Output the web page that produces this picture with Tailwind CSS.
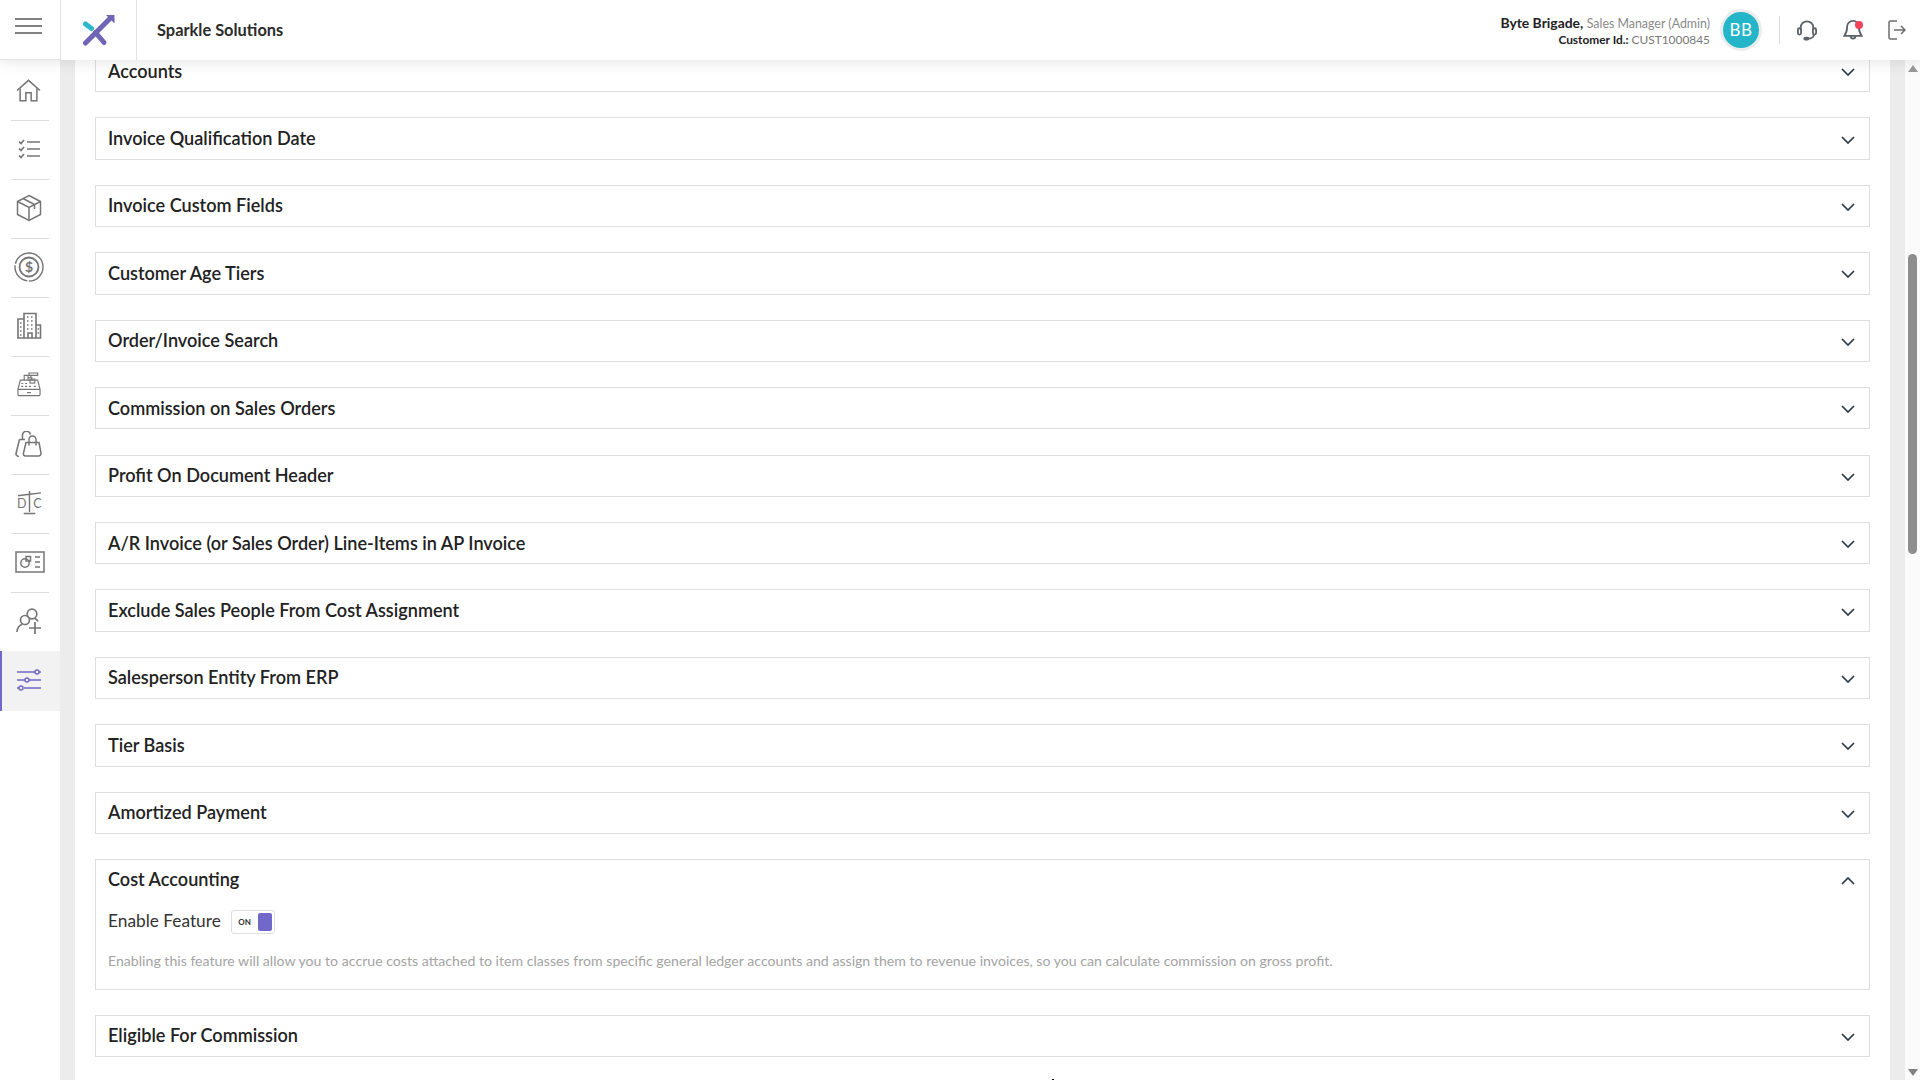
<!doctype html>
<html>
<head>
<meta charset="utf-8">
<script src="https://cdn.jsdelivr.net/npm/@tailwindcss/browser@4"></script>
</head>
<body class="bg-white font-['Lato','Noto_Sans',sans-serif] text-[#212529]">
<div class="relative w-[1920px] h-[1080px] overflow-hidden flex flex-col">
  <!-- Header -->
  <header class="relative z-10 h-[60px] shrink-0 flex items-center bg-white shadow-[0_2px_14px_rgba(0,0,0,0.1)]">
    <div class="w-[61px] h-full flex items-start pl-[15px] pt-[18px] border-r border-[#e3e3e3] border-b">
      <svg width="27" height="16" viewBox="0 0 27 16" fill="none" stroke="#808080" stroke-width="2"><path d="M0 1h27M0 8h27M0 15h27"/></svg>
    </div>
    <div class="w-[76px] h-full flex items-center justify-center border-r border-[#e3e3e3]">
      <svg width="34" height="34" viewBox="0 0 34 34"><path d="M3.500 30 L28 5.500" stroke="#6f64b5" stroke-width="5" stroke-linecap="round" fill="none"/><path d="M24 2 H32.500 V10.500 Z" fill="#6f64b5"/><path d="M13.500 19.500 L22 29.500" stroke="#6f64b5" stroke-width="5" stroke-linecap="round"/><path d="M3.500 11 L9.500 15.500" stroke="#2db8cc" stroke-width="5" stroke-linecap="round"/></svg>
    </div>
    <div class="pl-[20px] text-[16.400px] font-bold text-[#2b2b2b]">Sparkle Solutions</div>
    <div class="ml-auto flex items-center">
      <div class="text-right leading-none mr-[10px] pt-[2px]">
        <div class="text-[13.900px] font-bold text-[#222] leading-[16px]">Byte Brigade, <span class="text-[12.400px] font-normal text-[#8a8a8a]">Sales Manager (Admin)</span></div>
        <div class="text-[11.900px] font-bold text-[#222] leading-[16px]">Customer Id.: <span class="font-normal text-[#777]">CUST1000845</span></div>
      </div>
      <div class="w-[42px] h-[42px] rounded-full bg-[#25b5c9] border-[3.500px] border-[#ececec] flex items-center justify-center text-white text-[17px] tracking-[0.500px]">BB</div>
      <div class="w-px h-[28px] bg-[#dcdcdc] ml-[17px] mr-[17px]"></div>
      <svg class="mr-[26px]" width="20" height="22" viewBox="0 0 22 24" fill="none" stroke="#5c6268" stroke-width="2"><path d="M4 12V9.500a7 7 0 0 1 14 0V12"/><rect x="1" y="10" width="3.500" height="7" rx="1.700"/><rect x="17.500" y="10" width="3.500" height="7" rx="1.700"/><path d="M18.500 17c0 3-3 4.500-6 4.500"/><rect x="8" y="20.500" width="4.500" height="2" rx="1"/></svg>
      <div class="relative mr-[25px]">
        <svg class="block" width="20" height="22" viewBox="0 0 22 24" fill="none" stroke="#5c6268" stroke-width="2"><path d="M11 2a6.500 6.500 0 0 0-6.500 6.500c0 6-1.500 8-3 10h19c-1.500-2-3-4-3-10A6.500 6.500 0 0 0 11 2z"/><path d="M8.500 19a2.500 2.500 0 0 0 5 0"/></svg>
        <span class="absolute right-0 top-[2px] w-[8px] h-[8px] rounded-full bg-[#f4435a]"></span>
      </div>
      <svg class="mr-[14px]" width="18" height="20" viewBox="0 0 18 20" fill="none" stroke="#6d6d6d" stroke-width="1.500"><path d="M9 1H2.500A1.500 1.500 0 0 0 1 2.500v15A1.500 1.500 0 0 0 2.500 19H9"/><path d="M6 10h11M13 6l4 4-4 4"/></svg>
    </div>
  </header>

  <div class="flex flex-1 min-h-0">
    <!-- Sidebar -->
    <nav class="w-[60px] shrink-0 flex flex-col bg-white">
      <div class="h-[60px] flex items-center justify-center pr-[3px]"><svg width="27" height="23" viewBox="0 0 28 26" fill="none" stroke="#757575" stroke-width="1.700"><path d="M1 13 L14 1.500 27 13"/><path d="M4.500 10.500V24.500H11V15.500H17V24.500H23.500V10.500"/></svg></div>
      <div class="h-px mx-[11px] bg-[#dcdcdc]"></div>
      <div class="h-[58px] flex items-center justify-center pr-[2px] pb-[2px]"><svg width="22" height="20" viewBox="0 0 22 20" fill="none" stroke="#757575" stroke-width="1.700"><path d="M1 2.500l2 2 3-3.500M1 9.500l2 2 3-3.500M1 16.500l2 2 3-3.500"/><path d="M9 3h13M9 10h13M9 17h13"/></svg></div>
      <div class="h-px mx-[11px] bg-[#dcdcdc]"></div>
      <div class="h-[58px] flex items-center justify-center pr-[2px] pb-[3px]"><svg width="26" height="28" viewBox="0 0 26 28" fill="none" stroke="#757575" stroke-width="1.500"><path d="M13 1.500L24.500 7.500V20.500L13 26.500 1.500 20.500V7.500Z"/><path d="M1.500 7.500L13 13.500 24.500 7.500M13 13.500V26.500M7 4.500L18.500 10.500V15"/></svg></div>
      <div class="h-px mx-[11px] bg-[#dcdcdc]"></div>
      <div class="h-[58px] flex items-center justify-center pr-[2px] pb-[3px]"><svg width="30" height="30" viewBox="0 0 30 30" fill="none" stroke="#757575" stroke-width="1.400"><path d="M15 1a14 14 0 0 1 14 14M29 15a14 14 0 0 1-14 14 14 14 0 0 1-14-14A14 14 0 0 1 15 1" stroke-dasharray="22 1.500"/><circle cx="15" cy="15" r="9.500" stroke-width="1.800"/><text x="15" y="20" text-anchor="middle" font-size="14" font-weight="700" fill="#757575" stroke="none" font-family="Lato">$</text></svg></div>
      <div class="h-px mx-[11px] bg-[#dcdcdc]"></div>
      <div class="h-[58px] flex items-center justify-center pr-[2px] pb-[3px]"><svg width="26" height="27" viewBox="0 0 26 27" fill="none" stroke="#757575" stroke-width="1.600"><path d="M8 26V1.500H20V26M8 7H2V26H24.500V13H20M1 26H25"/><path d="M11 5h1.500M15 5h1.500M11 9h1.500M15 9h1.500M11 13h1.500M15 13h1.500M11 17h1.500M15 17h1.500M4 11h1.500M4 15h1.500M4 19h1.500M4 23h1.500M21.500 17h1.500M21.500 21h1.500"/><path d="M12 26v-5h4v5"/></svg></div>
      <div class="h-px mx-[11px] bg-[#dcdcdc]"></div>
      <div class="h-[58px] flex items-center justify-center pr-[2px] pb-[4px]"><svg width="26" height="25" viewBox="0 0 26 26" fill="none" stroke="#757575" stroke-width="1.200"><path d="M1.500 18v5.500a1 1 0 0 0 1 1h21a1 1 0 0 0 1-1V18M1.500 18L4 8.500H22L24.500 18M1.500 18h23"/><path d="M8 8.500V3.500h4v5M12 6h4v2.500M15 6V3M13 1h9v2.500h-9z"/><rect x="14" y="7.500" width="5" height="4"/><path d="M5 12h2M9 12h2M5 15h2M9 15h2M13 15h2M18 15h2M11 21.500h4"/></svg></div>
      <div class="h-px mx-[11px] bg-[#dcdcdc]"></div>
      <div class="h-[58px] flex items-center justify-center pr-[3px] pb-[3px]"><svg width="27" height="26" viewBox="0 0 27 26" fill="none" stroke="#757575" stroke-width="1.500"><path d="M7.500 9V5a4 4 0 0 1 8-1.500M4.500 8.500H10M4.500 8.500L1 22.500c-.3 1.500 1 2.700 3 3"/><path d="M10 25h13.500a2.500 2.500 0 0 0 2.500-3l-2-10.500H11L8.500 22a2.500 2.500 0 0 0 1.500 3z"/><path d="M14 14.500V8.500a3.500 3.500 0 0 1 7 0v6"/></svg></div>
      <div class="h-px mx-[11px] bg-[#dcdcdc]"></div>
      <div class="h-[58px] flex items-center justify-center pr-[2px] pb-[3px]"><svg width="27" height="25" viewBox="0 0 28 26" fill="none" stroke="#757575" stroke-width="1.500"><path d="M14 1V23M8 24.500h12M2 6l12-1.500L26 3"/><text x="1" y="19" font-size="13" fill="#757575" stroke="none" font-family="Lato">D</text><text x="18" y="19" font-size="13" fill="#757575" stroke="none" font-family="Lato">C</text></svg></div>
      <div class="h-px mx-[11px] bg-[#dcdcdc]"></div>
      <div class="h-[58px] flex items-center justify-center pr-[1px] pb-[3px]"><svg width="30" height="22" viewBox="0 0 30 22" fill="none" stroke="#757575" stroke-width="1.500"><rect x="1" y="1" width="28" height="20"/><circle cx="10" cy="12" r="4.200"/><path d="M11 5.500h4.500V10H11zM20 6h5M20 11h5M20 16h5"/></svg></div>
      <div class="h-px mx-[11px] bg-[#dcdcdc]"></div>
      <div class="h-[58px] flex items-center justify-center pr-[2px] pb-[3px]"><svg width="26" height="26" viewBox="0 0 26 26" fill="none" stroke="#757575" stroke-width="1.700"><circle cx="9" cy="12" r="4.500"/><circle cx="16" cy="6" r="4.800"/><path d="M1 24c0-4 2.500-7 5-7.500M19 10.500c1 .8 2.500 1.500 3 3M13 20h12M19 14v12"/></svg></div>
      <div class="h-[60px] flex items-center justify-center bg-[#f2f2f2] border-l-2 border-[#7268c9] pb-[3px] pr-[4px]"><svg width="24" height="22" viewBox="0 0 24 22" fill="none" stroke="#7268c9" stroke-width="1.500"><path d="M0 3h18M22 3h2M0 11h8M12 11h12M0 19h2M7 19h17"/><circle cx="20" cy="3" r="2"/><circle cx="10" cy="11" r="2"/><circle cx="4" cy="19" r="2"/></svg></div>
    </nav>
    <div class="w-[15px] shrink-0 bg-[#ececec]"></div>

    <!-- Main -->
    <main class="w-[1815px] shrink-0 overflow-hidden pl-[20px] pr-[20px] pt-0">
      <div class="flex flex-col gap-[25.100px] mt-[-10px] text-[18.100px] font-semibold text-[#222]">
        <div class="h-[42.330px] flex items-center justify-between border border-[#dedede] pl-[12px] pr-[14px]"><span>Accounts</span><svg class="mt-[2px]" width="14" height="8" viewBox="0 0 14 8" fill="none" stroke="#2c3a47" stroke-width="1.700"><path d="M1 1l6 6 6-6"/></svg></div>
        <div class="h-[42.330px] flex items-center justify-between border border-[#dedede] pl-[12px] pr-[14px]"><span>Invoice Qualification Date</span><svg class="mt-[2px]" width="14" height="8" viewBox="0 0 14 8" fill="none" stroke="#2c3a47" stroke-width="1.700"><path d="M1 1l6 6 6-6"/></svg></div>
        <div class="h-[42.330px] flex items-center justify-between border border-[#dedede] pl-[12px] pr-[14px]"><span>Invoice Custom Fields</span><svg class="mt-[2px]" width="14" height="8" viewBox="0 0 14 8" fill="none" stroke="#2c3a47" stroke-width="1.700"><path d="M1 1l6 6 6-6"/></svg></div>
        <div class="h-[42.330px] flex items-center justify-between border border-[#dedede] pl-[12px] pr-[14px]"><span>Customer Age Tiers</span><svg class="mt-[2px]" width="14" height="8" viewBox="0 0 14 8" fill="none" stroke="#2c3a47" stroke-width="1.700"><path d="M1 1l6 6 6-6"/></svg></div>
        <div class="h-[42.330px] flex items-center justify-between border border-[#dedede] pl-[12px] pr-[14px]"><span>Order/Invoice Search</span><svg class="mt-[2px]" width="14" height="8" viewBox="0 0 14 8" fill="none" stroke="#2c3a47" stroke-width="1.700"><path d="M1 1l6 6 6-6"/></svg></div>
        <div class="h-[42.330px] flex items-center justify-between border border-[#dedede] pl-[12px] pr-[14px]"><span>Commission on Sales Orders</span><svg class="mt-[2px]" width="14" height="8" viewBox="0 0 14 8" fill="none" stroke="#2c3a47" stroke-width="1.700"><path d="M1 1l6 6 6-6"/></svg></div>
        <div class="h-[42.330px] flex items-center justify-between border border-[#dedede] pl-[12px] pr-[14px]"><span>Profit On Document Header</span><svg class="mt-[2px]" width="14" height="8" viewBox="0 0 14 8" fill="none" stroke="#2c3a47" stroke-width="1.700"><path d="M1 1l6 6 6-6"/></svg></div>
        <div class="h-[42.330px] flex items-center justify-between border border-[#dedede] pl-[12px] pr-[14px]"><span>A/R Invoice (or Sales Order) Line-Items in AP Invoice</span><svg class="mt-[2px]" width="14" height="8" viewBox="0 0 14 8" fill="none" stroke="#2c3a47" stroke-width="1.700"><path d="M1 1l6 6 6-6"/></svg></div>
        <div class="h-[42.330px] flex items-center justify-between border border-[#dedede] pl-[12px] pr-[14px]"><span>Exclude Sales People From Cost Assignment</span><svg class="mt-[2px]" width="14" height="8" viewBox="0 0 14 8" fill="none" stroke="#2c3a47" stroke-width="1.700"><path d="M1 1l6 6 6-6"/></svg></div>
        <div class="h-[42.330px] flex items-center justify-between border border-[#dedede] pl-[12px] pr-[14px]"><span>Salesperson Entity From ERP</span><svg class="mt-[2px]" width="14" height="8" viewBox="0 0 14 8" fill="none" stroke="#2c3a47" stroke-width="1.700"><path d="M1 1l6 6 6-6"/></svg></div>
        <div class="h-[42.330px] flex items-center justify-between border border-[#dedede] pl-[12px] pr-[14px]"><span>Tier Basis</span><svg class="mt-[2px]" width="14" height="8" viewBox="0 0 14 8" fill="none" stroke="#2c3a47" stroke-width="1.700"><path d="M1 1l6 6 6-6"/></svg></div>
        <div class="h-[42.330px] flex items-center justify-between border border-[#dedede] pl-[12px] pr-[14px]"><span>Amortized Payment</span><svg class="mt-[2px]" width="14" height="8" viewBox="0 0 14 8" fill="none" stroke="#2c3a47" stroke-width="1.700"><path d="M1 1l6 6 6-6"/></svg></div>
        <div class="h-[130.500px] border border-[#dedede] pl-[12px] pr-[14px] flex flex-col">
          <div class="h-[40px] shrink-0 flex items-center justify-between"><span>Cost Accounting</span><svg class="mt-[1px]" width="14" height="8" viewBox="0 0 14 8" fill="none" stroke="#2c3a47" stroke-width="1.700"><path d="M1 7l6-6 6 6"/></svg></div>
          <div class="flex items-center gap-[10.500px] mt-[10px] h-[24px] font-normal text-[17.300px] text-[#333]">
            <span class="mt-[-2px]">Enable Feature</span>
            <span class="w-[44px] h-[24px] rounded-[3px] border border-[#dedede] flex items-center justify-between pl-[6px] pr-[2px] text-[8px] font-bold text-[#333]"><span>ON</span><span class="w-[14px] h-[18px] rounded-[2px] bg-[#7268c9]"></span></span>
          </div>
          <div class="mt-[16px] text-[14.130px] font-normal text-[#a4a4a4]">Enabling this feature will allow you to accrue costs attached to item classes from specific general ledger accounts and assign them to revenue invoices, so you can calculate commission on gross profit.</div>
        </div>
        <div class="h-[42.330px] flex items-center justify-between border border-[#dedede] pl-[12px] pr-[14px]"><span>Eligible For Commission</span><svg class="mt-[2px]" width="14" height="8" viewBox="0 0 14 8" fill="none" stroke="#2c3a47" stroke-width="1.700"><path d="M1 1l6 6 6-6"/></svg></div>
      </div>
    </main>
    <div class="w-[15px] shrink-0 bg-[#ececec]"></div>
    <!-- Scrollbar -->
    <div class="w-[15px] shrink-0 bg-[#fbfbfb] flex flex-col items-center pt-[5px] pb-[4px]">
      <svg width="10" height="7" viewBox="0 0 10 7"><path d="M5 0l5 7H0z" fill="#9a9a9a"/></svg>
      <div class="w-[8.500px] h-[300px] mt-[182px] rounded-full bg-[#8e8e8e]"></div>
      <svg class="mt-auto" width="10" height="7" viewBox="0 0 10 7"><path d="M5 7l5-7H0z" fill="#808080"/></svg>
    </div>
  </div>
  <span class="absolute left-[1052px] top-[1079px] w-[2px] h-px bg-black"></span>
</div>
</body>
</html>
